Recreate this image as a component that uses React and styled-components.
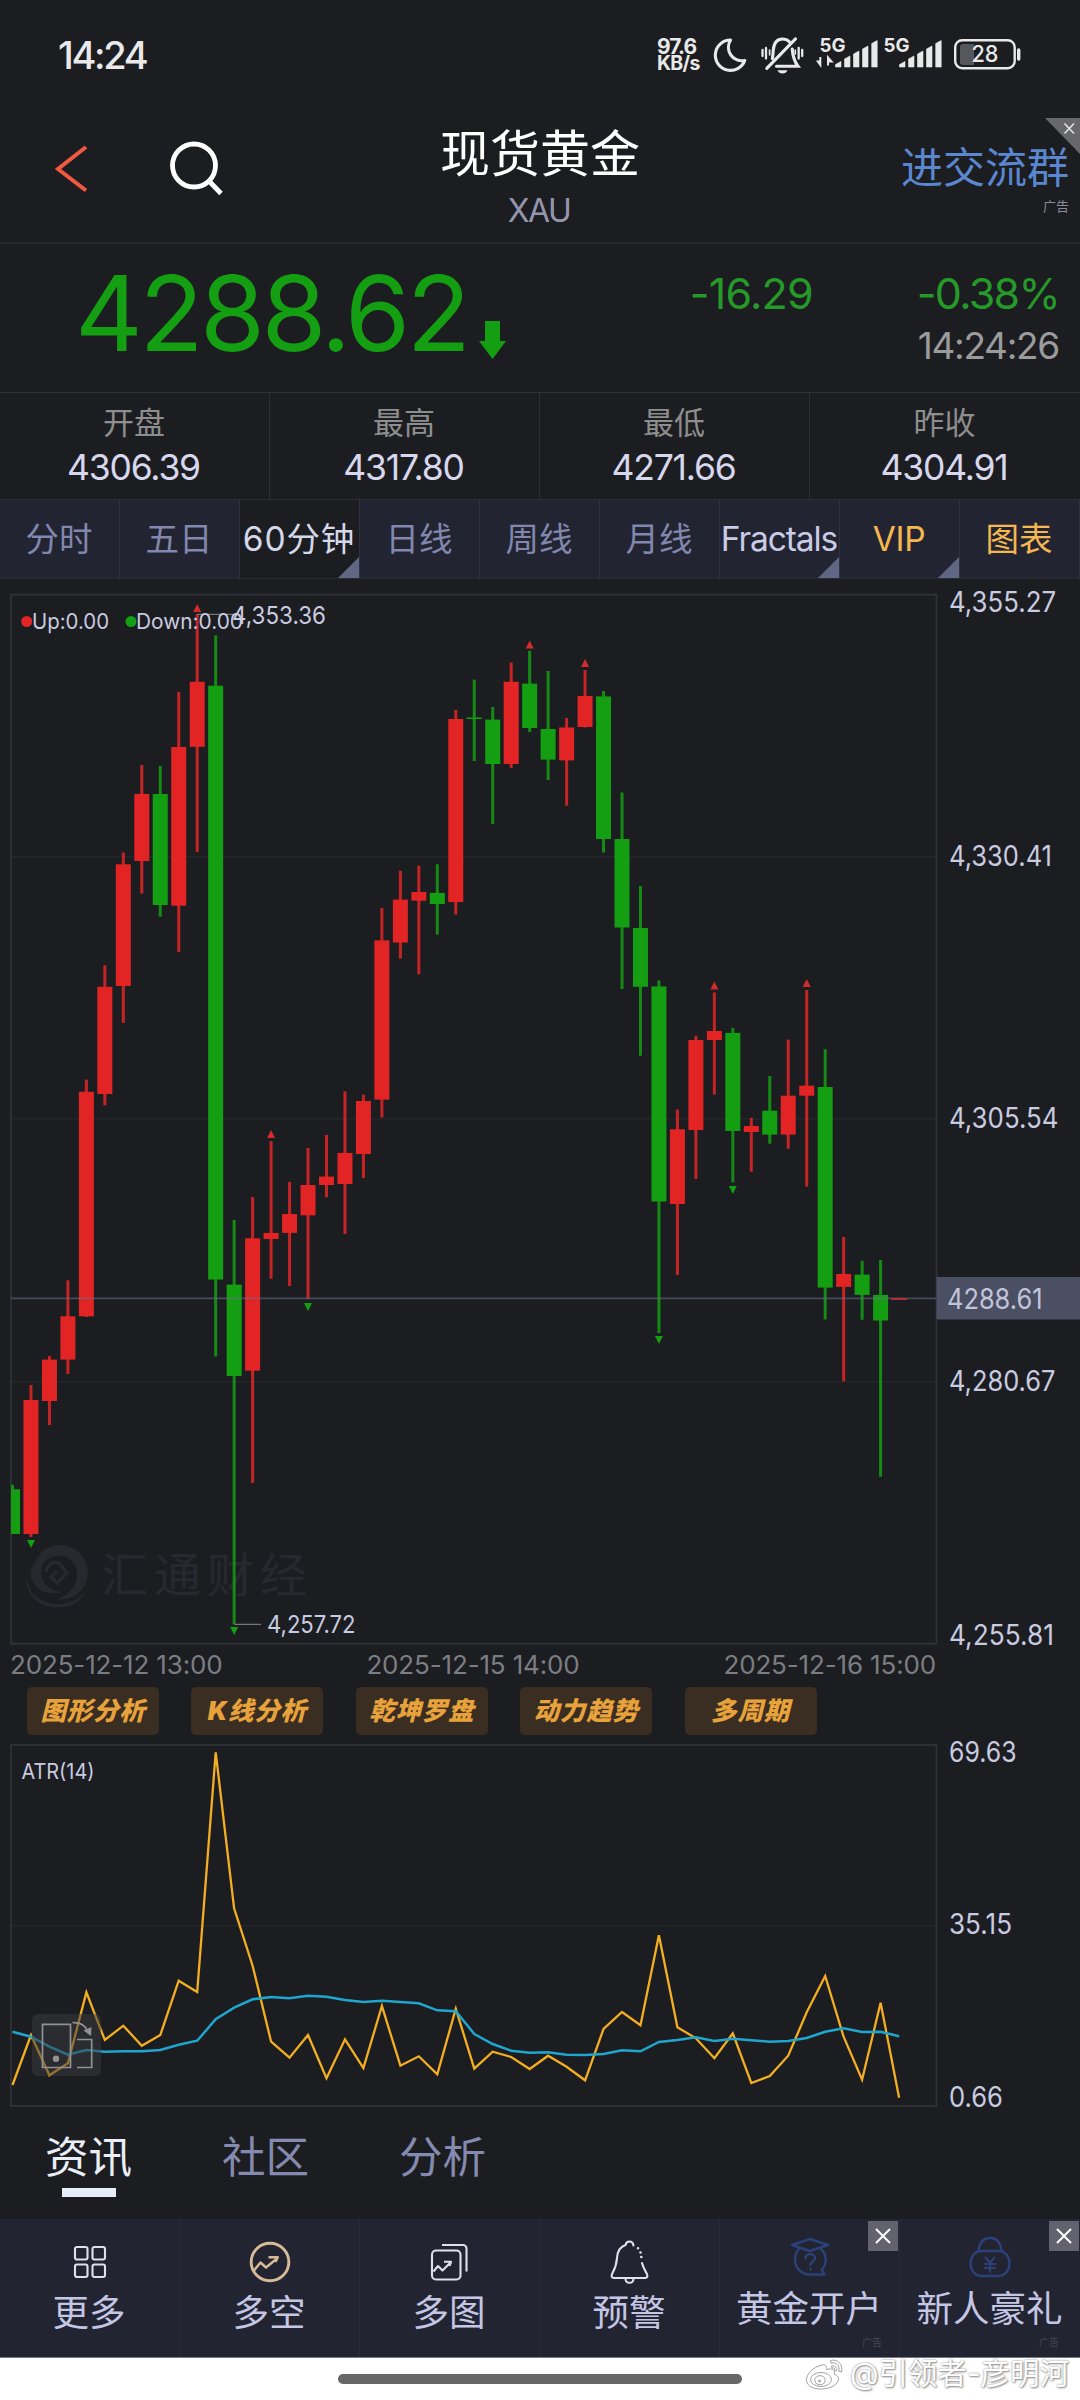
import React from "react";
import styled, { createGlobalStyle } from "styled-components";

const FONT = `Inter, "Noto Sans CJK SC", sans-serif`;
const BG = "#1c1d21";
const PANEL = "#232432";
const RED = "#e32424";
const GREEN = "#149e12";
const AXIS = "#c9cbe0";

const Global = createGlobalStyle`
  *, *::before, *::after { box-sizing: border-box; }
  html, body { margin: 0; padding: 0; background: ${BG}; }
  svg { display: block; flex: none; overflow: visible; }
`;

const Screen = styled.div`
  width: 1080px;
  height: 2400px;
  overflow: hidden;
  display: flex;
  flex-direction: column;
  background: ${BG};
  font-family: ${FONT};
  color: #fff;
  white-space: nowrap;
`;

/* ---------- status bar ---------- */
const StatusBar = styled.div`
  height: 110px;
  flex: none;
  display: flex;
  align-items: center;
  justify-content: space-between;
  padding: 0 58px 0 58px;
  color: #e9e9ea;
`;
const Clock = styled.div`
  font-size: 38px;
  font-weight: 500;
  line-height: 44px;
  letter-spacing: -2.3px;
`;
const StatusIcons = styled.div`
  display: flex;
  align-items: center;
`;
const NetSpeed = styled.div`
  width: 56px;
  display: flex;
  flex-direction: column;
  font-weight: 700;
  line-height: 17px;
  font-size: 21px;
  letter-spacing: -0.9px;
`;
const NetUnit = styled.span`
  font-size: 19.5px;
  letter-spacing: -0.7px;
`;
const IconSlot = styled.div`
  width: ${(p) => p.$w}px;
  flex: none;
`;

/* ---------- header ---------- */
const Header = styled.header`
  height: 134px;
  flex: none;
  display: grid;
  grid-template-columns: 1fr 300px 1fr;
  border-bottom: 2px solid #26282e;
  position: relative;
`;
const HeaderLeft = styled.div`
  display: flex;
  align-items: flex-start;
  padding: 30px 0 0 54px;
  gap: 78px;
`;
const HeaderTitle = styled.div`
  display: flex;
  flex-direction: column;
  align-items: center;
  padding-top: 14px;
`;
const Title = styled.h1`
  margin: 0;
  font-size: 50px;
  font-weight: 400;
  line-height: 60px;
`;
const Symbol = styled.div`
  margin-top: 9px;
  padding-right: 2px;
  font-size: 32px;
  line-height: 36px;
  letter-spacing: -1.6px;
  color: #9596ae;
`;
const HeaderRight = styled.div`
  display: flex;
  flex-direction: column;
  align-items: flex-end;
  padding: 34px 11px 0 0;
`;
const GroupLink = styled.a`
  font-size: 42px;
  line-height: 48px;
  color: #5a87cf;
`;
const AdMark = styled.span`
  margin-top: 6px;
  font-size: 13px;
  line-height: 16px;
  color: #8a8b96;
`;
const CornerClose = styled.div`
  position: absolute;
  right: 0;
  top: 8px;
`;

/* ---------- quote ---------- */
const Quote = styled.section`
  height: 148px;
  flex: none;
  display: flex;
  align-items: flex-start;
  padding: 0 21px 0 75px;
`;
const Price = styled.div`
  margin-top: 9px;
  font-size: 105px;
  font-weight: 400;
  line-height: 120px;
  letter-spacing: -3.4px;
  color: ${GREEN};
  width: 404px;
`;
const ArrowBox = styled.div`
  margin-top: 77px;
`;
const Change = styled.div`
  flex: 1;
  text-align: right;
  padding-right: 104px;
  margin-top: 24px;
  font-size: 43px;
  line-height: 50px;
  letter-spacing: -0.8px;
  color: #259a28;
`;
const QuoteRight = styled.div`
  margin-top: 24px;
  display: flex;
  flex-direction: column;
  align-items: flex-end;
`;
const Percent = styled.div`
  font-size: 43px;
  line-height: 50px;
  letter-spacing: -1.7px;
  color: #259a28;
`;
const QuoteTime = styled.div`
  margin-top: 6px;
  font-size: 37px;
  line-height: 44px;
  letter-spacing: -1.3px;
  color: #9b9b9b;
`;

/* ---------- stats ---------- */
const Stats = styled.section`
  height: 107px;
  flex: none;
  display: grid;
  grid-template-columns: repeat(4, 1fr);
  border-top: 1px solid #303238;
`;
const Stat = styled.div`
  display: flex;
  flex-direction: column;
  align-items: center;
  padding: 11px 1px 0 0;
  border-right: 1px solid #2d2f35;
  &:last-child { border-right: 0; }
`;
const StatLabel = styled.div`
  font-size: 31px;
  line-height: 38px;
  color: #8e8e8e;
`;
const StatValue = styled.div`
  margin-top: 6px;
  padding-right: 1px;
  font-size: 35.5px;
  line-height: 40px;
  letter-spacing: -1.2px;
  color: #d7d7ee;
`;

/* ---------- period tabs ---------- */
const Periods = styled.nav`
  height: 80px;
  flex: none;
  display: grid;
  grid-template-columns: repeat(9, 1fr);
  background: ${PANEL};
  border-top: 1px solid #2e3038;
  border-bottom: 1px solid #2a2b33;
`;
const Period = styled.div`
  position: relative;
  min-width: 0;
  display: flex;
  align-items: center;
  justify-content: center;
  padding-right: 1px;
  font-size: 33.5px;
  line-height: 40px;
  letter-spacing: ${(p) => p.$ls || 0}px;
  color: ${(p) => p.$color || "#8187ad"};
  background: ${(p) => (p.$active ? BG : "transparent")};
  border-right: 1px solid #30323d;
`;
const Corner = styled.i`
  position: absolute;
  right: 0;
  bottom: 0;
  width: 21px;
  height: 21px;
  background: #5f6784;
  clip-path: polygon(100% 0, 100% 100%, 0 100%);
`;

/* ---------- charts ---------- */
const ChartBox = styled.section`
  flex: none;
  height: ${(p) => p.$h}px;
`;
const Dates = styled.div`
  height: 42px;
  flex: none;
  display: flex;
  justify-content: space-between;
  width: 936px;
  padding: 4px 0 0 10px;
  font-size: 26px;
  line-height: 32px;
  letter-spacing: -0.15px;
  color: #7c7d82;
`;
const Chips = styled.div`
  flex: none;
  height: 48px;
  display: flex;
  gap: 32.4px;
  padding-left: 27px;
`;
const Chip = styled.button`
  width: 132px;
  height: 48px;
  padding: 0;
  border: 0;
  border-radius: 5px;
  background: #3a2d21;
  color: #e8a23c;
  font: italic 900 25.5px/48px ${FONT};
  letter-spacing: 0.8px;
`;

/* ---------- bottom ---------- */
const NewsTabs = styled.nav`
  flex: none;
  height: 109px;
  display: flex;
  gap: 89px;
  padding-left: 45px;
`;
const NewsTab = styled.div`
  width: 88px;
  display: flex;
  flex-direction: column;
  align-items: center;
  padding-top: 21.5px;
  font-size: 43.5px;
  line-height: 50px;
  color: ${(p) => (p.$active ? "#e9eef8" : "#858bb0")};
`;
const NewsText = styled.span`
  margin-left: -1px;
`;
const Underline = styled.i`
  margin-top: 6.5px;
  width: 54px;
  height: 9px;
  background: #e6edf8;
`;
const BottomNav = styled.nav`
  flex: none;
  height: 139px;
  display: grid;
  grid-template-columns: repeat(6, 1fr);
  background: ${PANEL};
  border-bottom: 1px solid #77777f;
`;
const NavItem = styled.div`
  position: relative;
  min-width: 0;
  display: flex;
  flex-direction: column;
  align-items: center;
  padding-top: ${(p) => (p.$ad ? 16 : 21)}px;
  gap: ${(p) => (p.$ad ? 8 : 7)}px;
  border-right: 1px solid #292a37;
  &:last-child { border-right: 0; }
`;
const NavIcon = styled.div`
  height: 44px;
  display: flex;
  align-items: center;
`;
const NavLabel = styled.div`
  padding-right: 1px;
  font-size: 36.5px;
  line-height: 44px;
  color: #c3c6e4;
`;
const NavClose = styled.div`
  position: absolute;
  right: 1px;
  top: 2px;
  width: 30px;
  height: 30px;
  display: flex;
  align-items: center;
  justify-content: center;
  background: #636370;
`;
const NavAd = styled.span`
  position: absolute;
  right: ${(p) => p.$r}px;
  bottom: 9px;
  font-size: 10px;
  line-height: 12px;
  color: #454654;
`;
const HomeArea = styled.div`
  position: relative;
  flex: 1;
  display: flex;
  justify-content: center;
  padding-top: 16px;
  background: #fff;
`;
const HomeBar = styled.div`
  width: 404px;
  height: 10px;
  border-radius: 5px;
  background: #676767;
`;
const Signature = styled.div`
  position: absolute;
  right: 11px;
  top: -2px;
  display: flex;
  align-items: center;
  gap: 5px;
  height: 34px;
  font-size: 29.5px;
  line-height: 34px;
  color: #fff;
  text-shadow: 0 0 2px #8a8a8a, 1px 1px 2px #8f8f8f;
`;

/* ---------- data ---------- */
const X = (i) => 12.5 + 18.47 * i;

// [colour, high, body top, body bottom, low]
const CANDLES = [
  ["G", 1484.7, 1489.3, 1534, 1534], ["R", 1385, 1400, 1534, 1537],
  ["R", 1356, 1359.6, 1401, 1425], ["R", 1280.3, 1316.3, 1359.6, 1374],
  ["R", 1079.6, 1091.8, 1316.3, 1317], ["R", 965.4, 986.8, 1094, 1105.4],
  ["R", 852.5, 864.3, 986, 1022.9], ["R", 765, 794, 861, 893.6],
  ["G", 766, 794, 905, 916.8], ["R", 692, 747, 905.7, 952],
  ["R", 614, 681.8, 746.8, 852], ["G", 635.4, 685.7, 1279.6, 1356.5],
  ["G", 1219.9, 1284.6, 1376, 1624.4], ["R", 1197, 1238.3, 1370.7, 1483],
  ["R", 1141, 1232.9, 1239, 1278.8], ["R", 1182, 1214, 1232.9, 1286],
  ["R", 1148, 1185, 1215.3, 1298.7], ["R", 1135, 1176.6, 1185, 1197.3],
  ["R", 1091.4, 1152.9, 1184, 1234], ["R", 1094.6, 1101, 1154, 1178],
  ["R", 907.9, 940.4, 1099.6, 1117.5], ["R", 870.7, 899.6, 942.5, 958.6],
  ["R", 865.7, 892, 900.7, 974.3], ["G", 864.3, 892.9, 904, 934.6],
  ["R", 710, 719, 902, 914.6], ["G", 679.6, 717.5, 719, 761],
  ["G", 707, 719.6, 764, 824], ["R", 662.5, 681.8, 764, 768],
  ["G", 650.7, 683.6, 728, 732], ["G", 671, 729, 759.6, 780],
  ["R", 718, 727.5, 760.4, 805.7], ["R", 670, 696, 727, 727.5],
  ["G", 691, 696.4, 839, 852.5], ["G", 792.5, 839, 927.5, 989],
  ["G", 886, 928, 986.8, 1055.7], ["G", 980.4, 986.4, 1201.5, 1333],
  ["R", 1109.6, 1129.3, 1204, 1275], ["R", 1035.7, 1040, 1130, 1179],
  ["R", 992.5, 1031, 1040, 1094.6], ["G", 1027.9, 1032.9, 1131, 1182.4],
  ["R", 1118, 1126, 1132, 1171.7], ["G", 1076, 1110.7, 1134.6, 1143.7],
  ["R", 1039.6, 1095.7, 1134.6, 1148.7], ["R", 990, 1085.7, 1095.7, 1186.6],
  ["G", 1049.3, 1087, 1287.6, 1319.4], ["R", 1237, 1274, 1286.9, 1381.4],
  ["G", 1260.8, 1274.6, 1294.9, 1319.8], ["G", 1260, 1294.9, 1320.5, 1476.7],
  ["R", 1298.6, 1298.6, 1299.8, 1299.8],
];
const UPS = [[10, 604], [14, 1130], [28, 640.4], [31, 659], [38, 981.4], [43, 979]];
const DOWNS = [[1, 1540], [12, 1627], [16, 1303], [35, 1336], [39, 1186]];

const ATR_FAST = [
  1245, 1095, 1216, 1180, 967, 1110, 1067, 1127, 1095, 932, 966, 247, 715, 887, 1115, 1163,
  1095, 1225, 1108, 1194, 1008, 1187, 1159, 1213, 1016, 1196, 1145, 1161, 1197, 1157, 1190,
  1231, 1077, 1026, 1066, 796, 1072, 1105, 1165, 1090, 1239, 1218, 1157, 1027, 918, 1100,
  1229, 998, 1283,
];
const ATR_SLOW = [
  1085, 1100, 1130, 1154, 1140, 1145, 1144, 1144, 1140, 1124, 1112, 1048, 1013, 988, 981, 985,
  977, 980, 990, 996, 992, 996, 1000, 1021, 1024, 1092, 1122, 1142, 1148, 1147, 1154, 1155,
  1152, 1141, 1144, 1116, 1110, 1102, 1113, 1106, 1111, 1115, 1113, 1104, 1085, 1075, 1086,
  1085, 1099,
];
const toPoints = (vals) =>
  vals.map((v, i) => `${Math.max(12, X(i)).toFixed(1)},${(1670 + v / 3).toFixed(1)}`).join(" ");

const STATS = [
  ["开盘", "4306.39"],
  ["最高", "4317.80"],
  ["最低", "4271.66"],
  ["昨收", "4304.91"],
];
const PERIODS = [
  { t: "分时" }, { t: "五日" },
  { t: "60分钟", active: true, color: "#d5d8ea", corner: true, ls: 0.9 },
  { t: "日线" }, { t: "周线" }, { t: "月线" },
  { t: "Fractals", color: "#c9cce6", corner: true, ls: -1.1 },
  { t: "VIP", color: "#f5b74f", corner: true, ls: -0.4 },
  { t: "图表", color: "#f5b74f" },
];

/* ---------- icons ---------- */
const Moon = () => (
  <svg width="34" height="35" viewBox="0 0 34 35" fill="none" stroke="#e9e9ea" strokeWidth="3.1" strokeLinejoin="round">
    <path d="M17.6 2A15.2 15.2 0 1 0 31.8 22.4A13.4 13.4 0 0 1 17.6 2Z" />
  </svg>
);

const MutedBell = () => (
  <svg width="43" height="37" viewBox="0 0 43 37" fill="none" stroke="#e9e9ea" strokeWidth="3.1" strokeLinecap="round">
    <path d="M11.3 21.5C12 19 12 17 12.2 13.5C12.8 6.5 16 2 21.5 2C24.5 2 26.6 3 28.3 4.6" />
    <path d="M34.5 1.8L5.8 31.4" />
    <path d="M31.2 12C31.8 19 33 24 37 29.3H15.5" />
    <path d="M16.5 33.2H26.5C25.5 35.6 23.8 36.5 21.5 36.5S17.5 35.6 16.5 33.2Z" fill="#e9e9ea" stroke="none" />
    <path d="M1.5 13V19M5 11V21.5M41.2 13V19M37.7 11V21.5" strokeWidth="2.3" />
    <path d="M8.6 13V18M34.3 13V17" strokeWidth="1.6" />
  </svg>
);

const Signal = ({ data }) => (
  <svg width="64" height="40" viewBox="0 0 64 40" fill="#e9e9ea">
    <text x="2.5" y="17" fontFamily={FONT} fontWeight="700" fontSize="19" textLength="26" lengthAdjust="spacingAndGlyphs">5G</text>
    {data && (
      <path d="M3.3 22V30M0.8 26.5L3.3 30V26.5ZM11 30.5V22.5L14.5 26.5H11Z" stroke="#e9e9ea" strokeWidth="2" />
    )}
    {[[18.5, 26.5], [27.5, 21], [36.5, 16], [45.5, 11], [54.7, 5.5]].map(([x, y], i) => (
      <path key={i} d={`M${x} ${y + 3}L${x + 5.5} ${y}V32H${x}Z`} stroke="#e9e9ea" strokeWidth="0.6" strokeLinejoin="round" />
    ))}
  </svg>
);

const Battery = () => (
  <svg width="68" height="32" viewBox="0 0 68 32" fill="none">
    <rect x="1.2" y="1.2" width="59.5" height="28" rx="7" stroke="#e9e9ea" strokeWidth="2.4" />
    <path d="M9 5H20V26H9A3 3 0 0 1 6 23V8A3 3 0 0 1 9 5Z" fill="#56575b" />
    <path d="M64.7 11V20" stroke="#e9e9ea" strokeWidth="3.4" strokeLinecap="round" />
    <text x="17.5" y="23.3" fontFamily={FONT} fontWeight="500" fontSize="22.5" fill="#e9e9ea" textLength="27" lengthAdjust="spacingAndGlyphs">28</text>
  </svg>
);

const GridIcon = () => (
  <svg width="34" height="34" viewBox="0 0 34 34" fill="none" stroke="#dfe0e8" strokeWidth="2.1">
    <rect x="2" y="2" width="12.5" height="12.5" rx="2" />
    <rect x="19.5" y="2" width="12.5" height="12.5" rx="2" />
    <rect x="2" y="19.5" width="12.5" height="12.5" rx="2" />
    <rect x="19.5" y="19.5" width="12.5" height="12.5" rx="2" />
  </svg>
);
const TrendCircle = () => (
  <svg width="42" height="42" viewBox="0 0 42 42" fill="none" stroke="#d6bb97" strokeWidth="2.9" strokeLinejoin="round">
    <circle cx="21" cy="21" r="18.8" />
    <path d="M5 29.5L11.5 21.5L17 26.5L28 17.5M19.5 16.3H28.8L26.5 21" strokeWidth="2.4" />
  </svg>
);
const MultiChart = () => (
  <svg width="37" height="38" viewBox="0 0 37 38" fill="none" stroke="#dfe0e8" strokeWidth="2.1" strokeLinejoin="round">
    <rect x="1" y="7.5" width="28.5" height="29" rx="4" />
    <path d="M11 2H32A3.5 3.5 0 0 1 35.5 5.5V28.5" />
    <path d="M2.5 28.5L7 23L11.5 27.5L19.5 19.5M13 18.8H20L18.5 23" />
  </svg>
);
const AlertBell = () => (
  <svg width="39" height="44" viewBox="0 0 39 44" fill="none" stroke="#e2e3e8" strokeWidth="2.1" strokeLinecap="round">
    <path d="M23.5 5.5C23 2.5 21.5 1.5 19.5 1.5S16 2.5 15.5 5C9.5 7 7.3 12 7 18C6.6 25 4.5 29.5 2.3 33.5C1 36 1.5 38 4 38H35C37.5 38 38 36 36.7 33.5C34.5 29.5 33 27 32 23" />
    <path d="M28 8.3h.01M30.5 12.5h.01M31.3 17h.01" strokeWidth="2.6" />
    <path d="M15.5 39C15.7 41.5 17.3 42.8 19.5 42.8S23.3 41.5 23.5 39" />
  </svg>
);
const CapIcon = () => (
  <svg width="40" height="40" viewBox="0 0 40 40" fill="none" stroke="#2a4179" strokeWidth="2.4" strokeLinejoin="round" strokeLinecap="round">
    <path d="M2 8L20 2L38 8L20 14Z" />
    <path d="M9 12C6 15 5 19 5 22.5A14.8 14.8 0 0 0 20 37.5H34.5L31.7 33A14.8 14.8 0 0 0 31 12" />
    <path d="M15.5 21.5C15.5 15.5 25 16 25 21C25 24.5 20.5 24.5 20.5 28M20.5 32.3v.1" />
  </svg>
);
const PurseIcon = () => (
  <svg width="42" height="42" viewBox="0 0 42 42" fill="none" stroke="#2a4179" strokeWidth="2.4" strokeLinejoin="round" strokeLinecap="round">
    <path d="M9.5 14.5C10.5 6 15 2 21 2S31.5 6 32.5 14.5" />
    <path d="M13 40C6 40 1.5 34 1.5 27.5S6 15 12 15H30C36 15 40.5 21 40.5 27.5S36 40 29 40Z" />
    <path d="M16.5 21.5L21 27L25.5 21.5M21 27V36M16 28H26M16 32H26" strokeWidth="2" />
  </svg>
);
const CrossMark = () => (
  <svg width="18" height="18" viewBox="0 0 18 18" stroke="#fff" strokeWidth="2" fill="none">
    <path d="M2 2L16 16M16 2L2 16" />
  </svg>
);
const WeiboMark = () => (
  <svg width="40" height="34" viewBox="0 0 40 34" fill="#fff" stroke="#a2a2a2" strokeWidth="1">
    <path d="M17 9C8 11 1 18 1.5 24.5C2 31 10 33.5 17.5 33C27 32.3 34 27.5 33.5 22.5C33.2 19.5 30.5 18.8 29.3 18.3C30.5 14.5 28 11.5 21.5 13.6C22 10 20.5 8.2 17 9Z" />
    <ellipse cx="16" cy="23.5" rx="10.5" ry="7" />
    <ellipse cx="15" cy="24.2" rx="5.2" ry="4.6" />
    <circle cx="14.5" cy="25" r="1.6" fill="#b0b0b0" stroke="none" />
    <path d="M25.5 4.5C32 2.5 38.5 8 36.5 16L33.8 15.2C35.2 9.5 31 5.5 26.2 7.2ZM26.5 10C29.8 9 32.5 11.5 31.5 15L29.5 14.3C30 12.3 28.8 11.5 27 12Z" />
  </svg>
);

/* ---------- chart drawings ---------- */
const AxisText = ({ y, w, children, x = 950, size = 28, color = AXIS }) => (
  <text x={x - 1} y={y + size * 0.3636} fontSize={size} textLength={w} lengthAdjust="spacingAndGlyphs" fill={color}>
    {children}
  </text>
);

const CandleChart = () => (
  <svg width="1080" height="1066" viewBox="0 579 1080 1066" fontFamily={FONT}>
    <g stroke="#24262b" strokeWidth="1.5">
      <path d="M11 856.8H936M11 1119H936M11 1381.8H936" />
    </g>
    <rect x="11" y="594.7" width="925.5" height="1049" fill="none" stroke="#303238" strokeWidth="1.8" />
    <g fill="#28282f">
      <path d="M36 1560C42 1549 51 1544 61 1545C76 1546 88 1558 88 1573C87 1590 74 1600 57 1600C70 1594 78 1585 77 1573C76 1561 67 1555 57 1556C46 1557 41 1565 41 1573C42 1584 50 1591 62 1592C46 1597 33 1588 31 1576C30 1570 33 1565 36 1560Z" />
      <path d="M26 1578C30 1596 42 1604 58 1604C70 1604 80 1599 86 1590C80 1606 66 1608 52 1607C36 1605 26 1593 26 1578Z" />
      <path d="M46 1572C47 1564 53 1561 59 1563L67 1573L57 1583L51 1577L57 1571" fill="none" stroke="#28282f" strokeWidth="3.4" />
    </g>
    <text x="101" y="1591.5" fontSize="47" fill="#28282f" textLength="206">汇通财经</text>
    {CANDLES.map(([c, hi, top, bot, lo], i) => {
      const left = Math.max(11, X(i) - 7.5);
      return (
        <g key={i} fill={c === "R" ? RED : GREEN}>
          <rect x={X(i) - 1.5} y={hi} width="3" height={lo - hi} opacity="0.85" />
          <rect x={left} y={top} width={X(i) + 7.5 - left} height={bot - top} />
        </g>
      );
    })}
    {UPS.map(([i, y]) => (
      <path key={i} fill="#d32c2c" d={`M${X(i)} ${y}l4 8h-8z`} />
    ))}
    {DOWNS.map(([i, y]) => (
      <path key={i} fill={GREEN} d={`M${X(i)} ${y + 8}l4 -8h-8z`} />
    ))}
    <path d="M11 1298.3H936" stroke="#6c7088" strokeOpacity="0.55" strokeWidth="1.8" />
    <path d="M891 1299.2H907" stroke="#c3252d" strokeWidth="1.4" />
    <path d="M197 614.3H234M234.5 1624.4H261" stroke="#75767c" strokeWidth="1.2" />
    <circle cx="26.7" cy="621.5" r="5.5" fill={RED} />
    <AxisText x={33} y={621.5} size={21.5} w={77}>Up:0.00</AxisText>
    <circle cx="131" cy="621.5" r="5.5" fill={GREEN} />
    <AxisText x={137} y={621.5} size={21.5} w={107}>Down:0.00</AxisText>
    <AxisText x={233} y={615.5} size={24} w={94}>4,353.36</AxisText>
    <AxisText x={268} y={1624.7} size={24} w={88.5}>4,257.72</AxisText>
    <AxisText y={601.4} w={107}>4,355.27</AxisText>
    <AxisText y={855.8} w={103}>4,330.41</AxisText>
    <AxisText y={1118} w={109.5}>4,305.54</AxisText>
    <rect x="936.5" y="1277" width="143.5" height="42.5" fill="#4a4f64" />
    <AxisText x={948} y={1299.3} w={95.5} color="#c2c4da">4288.61</AxisText>
    <AxisText y={1381} w={106.5}>4,280.67</AxisText>
    <AxisText y={1634.7} w={105}>4,255.81</AxisText>
  </svg>
);

const AtrChart = () => (
  <svg width="1080" height="375" viewBox="0 1735 1080 375" fontFamily={FONT}>
    <path d="M11 1925.7H936" stroke="#24262b" strokeWidth="1.5" />
    <rect x="11" y="1745" width="925.5" height="361" fill="none" stroke="#303238" strokeWidth="1.8" />
    <AxisText x={22.5} y={1771} size={21} w={73}>ATR(14)</AxisText>
    <polyline points={toPoints(ATR_FAST)} fill="none" stroke="#f3ae22" strokeWidth="2.3" />
    <polyline points={toPoints(ATR_SLOW)} fill="none" stroke="#1fa6cf" strokeWidth="2.5" />
    <rect x="32" y="2014" width="69" height="62" rx="6" fill="#3a3b40" fillOpacity="0.52" />
    <g fill="none" stroke="#919196" strokeWidth="1.7">
      <path d="M42.5 2024.3H70.5V2067.5H42.5ZM77 2039.5H91.7V2067.5H77M72.5 2022.7C80 2022.2 85 2025 87.5 2031" />
    </g>
    <circle cx="56" cy="2058.7" r="3.2" fill="#919196" />
    <path d="M83.5 2030.5L91.5 2027L91 2036Z" fill="#919196" />
    <AxisText y={1751.7} w={67.5}>69.63</AxisText>
    <AxisText y={1924} w={63}>35.15</AxisText>
    <AxisText y={2096.7} w={54}>0.66</AxisText>
  </svg>
);

const NAV = [
  { t: "更多", Icon: GridIcon },
  { t: "多空", Icon: TrendCircle },
  { t: "多图", Icon: MultiChart },
  { t: "预警", Icon: AlertBell },
  { t: "黄金开户", Icon: CapIcon, ad: 17 },
  { t: "新人豪礼", Icon: PurseIcon, ad: 21 },
];

export default function App() {
  return (
    <Screen>
      <Global />
      <StatusBar>
        <Clock>14:24</Clock>
        <StatusIcons>
          <NetSpeed>
            97.6<NetUnit>KB/s</NetUnit>
          </NetSpeed>
          <IconSlot $w={48}><Moon /></IconSlot>
          <IconSlot $w={56}><MutedBell /></IconSlot>
          <IconSlot $w={64}><Signal data /></IconSlot>
          <IconSlot $w={73}><Signal /></IconSlot>
          <Battery />
        </StatusIcons>
      </StatusBar>

      <Header>
        <HeaderLeft>
          <svg width="36" height="56" viewBox="54 140 36 56" fill="none" stroke="#f0583f" strokeWidth="4">
            <path d="M86 147L58 169L86 190.5" />
          </svg>
          <svg width="56" height="58" viewBox="168 139 56 58" fill="none" stroke="#fff" strokeWidth="4.8">
            <circle cx="194" cy="164.5" r="21.5" />
            <path d="M209 180L221 192.5" />
          </svg>
        </HeaderLeft>
        <HeaderTitle>
          <Title>现货黄金</Title>
          <Symbol>XAU</Symbol>
        </HeaderTitle>
        <HeaderRight>
          <GroupLink>进交流群</GroupLink>
          <AdMark>广告</AdMark>
        </HeaderRight>
        <CornerClose>
          <svg width="35" height="36" viewBox="0 0 35 36">
            <path d="M0 0H35V36Z" fill="#68686c" />
            <path d="M19.5 5.5L29 15.5M29 5.5L19.5 15.5" stroke="#e8e8e8" strokeWidth="1.5" />
          </svg>
        </CornerClose>
      </Header>

      <Quote>
        <Price>4288.62</Price>
        <ArrowBox>
          <svg width="27" height="38" viewBox="0 0 27 38" fill={GREEN}>
            <path d="M6 0H21V20H27L13.5 38L0 20H6Z" />
          </svg>
        </ArrowBox>
        <Change>-16.29</Change>
        <QuoteRight>
          <Percent>-0.38%</Percent>
          <QuoteTime>14:24:26</QuoteTime>
        </QuoteRight>
      </Quote>

      <Stats>
        {STATS.map(([label, value]) => (
          <Stat key={label}>
            <StatLabel>{label}</StatLabel>
            <StatValue>{value}</StatValue>
          </Stat>
        ))}
      </Stats>

      <Periods>
        {PERIODS.map((p) => (
          <Period key={p.t} $active={p.active} $color={p.color} $ls={p.ls}>
            {p.t}
            {p.corner && <Corner />}
          </Period>
        ))}
      </Periods>

      <ChartBox $h={1066}><CandleChart /></ChartBox>
      <Dates>
        <span>2025-12-12 13:00</span>
        <span>2025-12-15 14:00</span>
        <span>2025-12-16 15:00</span>
      </Dates>
      <Chips>
        {["图形分析", "K线分析", "乾坤罗盘", "动力趋势", "多周期"].map((c) => (
          <Chip key={c}>{c}</Chip>
        ))}
      </Chips>
      <ChartBox $h={375}><AtrChart /></ChartBox>

      <NewsTabs>
        <NewsTab $active>
          <NewsText>资讯</NewsText>
          <Underline />
        </NewsTab>
        <NewsTab><NewsText>社区</NewsText></NewsTab>
        <NewsTab><NewsText>分析</NewsText></NewsTab>
      </NewsTabs>

      <BottomNav>
        {NAV.map(({ t, Icon, ad }) => (
          <NavItem key={t} $ad={ad}>
            <NavIcon><Icon /></NavIcon>
            <NavLabel>{t}</NavLabel>
            {ad && (
              <>
                <NavClose><CrossMark /></NavClose>
                <NavAd $r={ad}>广告</NavAd>
              </>
            )}
          </NavItem>
        ))}
      </BottomNav>

      <HomeArea>
        <HomeBar />
        <Signature>
          <WeiboMark />
          @引领者-彦明河
        </Signature>
      </HomeArea>
    </Screen>
  );
}
